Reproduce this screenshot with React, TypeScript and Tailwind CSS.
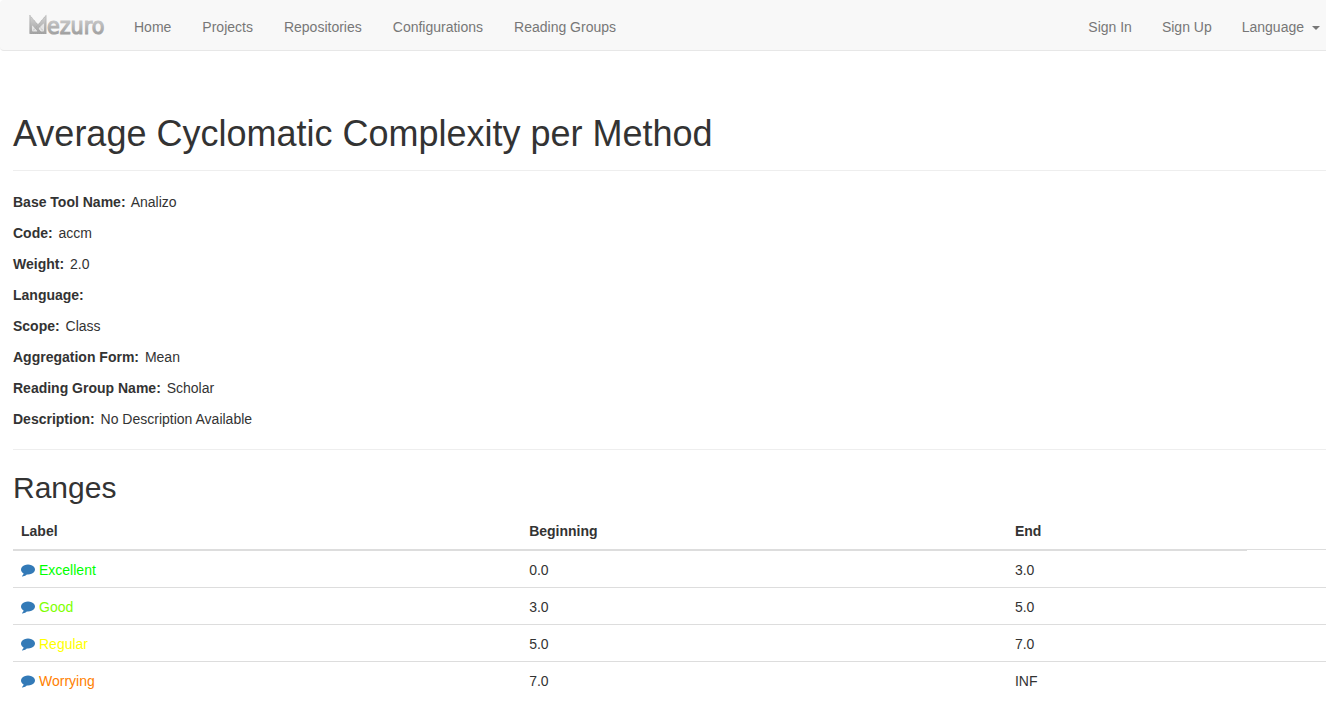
import React from "react";

const navLinks = ["Home", "Projects", "Repositories", "Configurations", "Reading Groups"];
const userLinks = ["Sign In", "Sign Up"];

const details = [
  { label: "Base Tool Name:", value: "Analizo" },
  { label: "Code:", value: "accm" },
  { label: "Weight:", value: "2.0" },
  { label: "Language:", value: "" },
  { label: "Scope:", value: "Class" },
  { label: "Aggregation Form:", value: "Mean" },
  { label: "Reading Group Name:", value: "Scholar" },
  { label: "Description:", value: "No Description Available" },
];

const ranges = [
  { label: "Excellent", color: "text-[#00ff00]", beginning: "0.0", end: "3.0" },
  { label: "Good", color: "text-[#80ff00]", beginning: "3.0", end: "5.0" },
  { label: "Regular", color: "text-[#ffff00]", beginning: "5.0", end: "7.0" },
  { label: "Worrying", color: "text-[#ff8000]", beginning: "7.0", end: "INF" },
];

function Logo() {
  return (
    <svg viewBox="0 0 78 30" className="h-[30px] w-[78px]" role="img" aria-label="Mezuro">
      <defs>
        <linearGradient id="silver" x1="0" y1="4" x2="0" y2="24" gradientUnits="userSpaceOnUse">
          <stop offset="0.1" stopColor="#d2d2d2" />
          <stop offset="1" stopColor="#a0a0a0" />
        </linearGradient>
      </defs>
      <path
        fill="url(#silver)"
        fillRule="evenodd"
        d="M1.500 5L10 14.500L18.300 4.500V24H1.500ZM4.200 15.500V21.300H9.200ZM15.800 13.500L10.800 18.500L13 21.300H15.800Z"
      />
      <path d="M4.200 15.500V21.300H9.200ZM15.800 13.500L10.800 18.500L13 21.300H15.800Z" fill="#e4e4e4" />
      <path d="M2 5.500L17 23M18 5.500L3 23" stroke="#a8a8a8" strokeWidth="0.8" strokeDasharray="1 1" fill="none" />
      <path d="M2 5.500V23.500H18V5.500" fill="none" stroke="#a6a6a6" strokeWidth="1" strokeDasharray="1 1" />
      <text
        x="19"
        y="24"
        fill="url(#silver)"
        stroke="url(#silver)"
        strokeWidth="1.1"
        fontFamily="'DejaVu Sans Condensed', 'DejaVu Sans', sans-serif"
        fontSize="23"
      >
        ezuro
      </text>
    </svg>
  );
}

function CommentIcon() {
  return (
    <svg viewBox="0 0 1792 1792" className="h-3.5 w-3.5 fill-[#337ab7]" aria-hidden="true">
      <path d="M1792 832q0 174-120 321.500t-326 233-450 85.500q-70 0-145-8-198 175-460 242-49 14-114 22-17 2-30.500-9t-17.500-29v-1q-3-4-.5-12t2-10 4.500-9.500l6-9 7-8.500 8-9q7-8 31-34.500t34.500-38 31-39.500 32.500-51 27-59 26-76q-157-89-247.500-220t-90.500-281q0-174 120-321.500t326-233 450-85.500 450 85.500 326 233 120 321.500z" />
    </svg>
  );
}

export default function App() {
  return (
    <div className="overflow-x-hidden bg-white font-['Liberation_Sans',Arial,sans-serif] text-sm leading-5 text-[#333333]">
      <nav className="flex items-stretch justify-between rounded-l border-b border-[#e7e7e7] bg-[#f8f8f8] pl-7 text-[#777777]">
        <div className="flex items-center">
          <a href="#" className="mr-[13px]">
            <Logo />
          </a>
          <ul className="flex gap-px">
            {navLinks.map((name) => (
              <li key={name}>
                <a href="#" className="block px-[15px] pt-[17px] pb-[13px]">{name}</a>
              </li>
            ))}
          </ul>
        </div>
        <ul className="flex pr-1.5">
          {userLinks.map((name) => (
            <li key={name}>
              <a href="#" className="block px-[15px] pt-[17px] pb-[13px]">{name}</a>
            </li>
          ))}
          <li>
            <button type="button" className="flex items-center gap-2 pt-[17px] pb-[13px] pl-[15px]">
              Language
              <svg viewBox="0 0 8 4" className="mt-0.5 h-1 w-2 fill-current" aria-hidden="true">
                <path d="M0 0H8L4 4Z" />
              </svg>
            </button>
          </li>
        </ul>
      </nav>

      <main className="pt-[63px] pl-[13px]">
        <h1 className="text-4xl leading-10">Average Cyclomatic Complexity per Method</h1>
        <hr className="mt-4 mb-[21px] border-[#eeeeee]" />
        <div className="flex flex-col gap-[11px]">
          {details.map(({ label, value }) => (
            <p key={label}>
              <strong className="mr-0.5">{label}</strong> {value}
            </p>
          ))}
        </div>
        <hr className="my-5 border-[#eeeeee]" />
        <h2 className="text-3xl leading-9">Ranges</h2>
        <table className="mt-[7px] w-full table-fixed border-separate border-spacing-0">
          <colgroup>
            <col className="w-[38.7%]" />
            <col className="w-[37%]" />
            <col className="w-[18.3%]" />
            <col />
          </colgroup>
          <thead>
            <tr className="text-left">
              <th className="border-b border-[#dddddd] p-2">Label</th>
              <th className="border-b border-[#dddddd] p-2">Beginning</th>
              <th className="border-b border-[#dddddd] p-2">End</th>
              <td className="border-b border-[#dddddd] p-2"></td>
            </tr>
          </thead>
          <tbody>
            {ranges.map(({ label, color, beginning, end }, index) => (
              <tr key={label}>
                <td className="border-t border-[#dddddd] px-2 pt-[9px] pb-[7px]">
                  <a href="#" className="flex items-center gap-1">
                    <CommentIcon />
                    <span className={color}>{label}</span>
                  </a>
                </td>
                <td className="border-t border-[#dddddd] px-2 pt-[9px] pb-[7px]">{beginning}</td>
                <td className="border-t border-[#dddddd] px-2 pt-[9px] pb-[7px]">{end}</td>
                <td className={index === 0 ? "border-t border-transparent" : "border-t border-[#dddddd]"}></td>
              </tr>
            ))}
          </tbody>
        </table>
      </main>
    </div>
  );
}
